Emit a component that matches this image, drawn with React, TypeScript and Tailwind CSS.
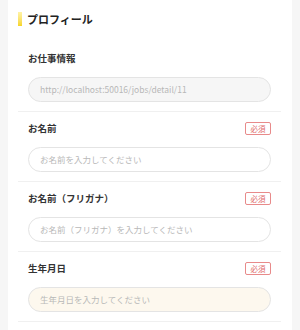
const FONT = '[font-family:"Noto_Sans_CJK_JP","Noto_Sans",sans-serif]';

type Field = {
  label: string;
  placeholder?: string;
  value?: string;
  required?: boolean;
  tone?: 'disabled' | 'plain' | 'cream';
};

const fields: Field[] = [
  { label: 'お仕事情報', value: 'http://localhost:50016/jobs/detail/11', tone: 'disabled' },
  { label: 'お名前', placeholder: 'お名前を入力してください', required: true, tone: 'plain' },
  { label: 'お名前（フリガナ）', placeholder: 'お名前（フリガナ）を入力してください', required: true, tone: 'plain' },
  { label: '生年月日', placeholder: '生年月日を入力してください', required: true, tone: 'cream' },
];

function FieldRow({ f, first }: { f: Field; first: boolean }) {
  const bg =
    f.tone === 'disabled' ? 'bg-[#f6f6f6]' : f.tone === 'cream' ? 'bg-[#fdf8ee]' : 'bg-white';
  return (
    <div className={`border-b border-[#f0f0f0] ${first ? 'pt-[26px]' : 'pt-[10px]'} pb-[9px]`}>
      <div className="flex items-center justify-between h-[13px] px-[10px]">
        <span className="text-[9.5px] font-bold text-[#333] leading-none">{f.label}</span>
        {f.required && (
          <span className="h-[13px] w-[26px] flex items-center justify-center border border-[#e88a8a] rounded-[2px] text-[7.5px] text-[#e06b6b] leading-none">
            必須
          </span>
        )}
      </div>
      <div className="px-[10px] mt-[12px]">
        <div
          className={`h-[25px] rounded-full border border-[#e4e4e4] ${bg} flex items-center pl-[11px] text-[8.5px] text-[#b8b8b8] leading-none whitespace-nowrap overflow-hidden`}
        >
          {f.value ?? f.placeholder}
        </div>
      </div>
    </div>
  );
}

export default function App() {
  return (
    <div className={`w-[300px] h-[330px] bg-[#f6f6f6] px-2 overflow-hidden ${FONT}`}>
      <div className="bg-white h-full px-[10px] pr-[11px]">
        <div className="pt-3 flex items-center h-[26px]">
          <span className="w-1 h-[14px] bg-gradient-to-b from-[#fff3a6] to-[#f7d51e]" />
          <span className="ml-[5px] text-[11px] font-bold text-[#222] leading-none">プロフィール</span>
        </div>
        {fields.map((f, i) => (
          <FieldRow key={f.label} f={f} first={i === 0} />
        ))}
      </div>
    </div>
  );
}
